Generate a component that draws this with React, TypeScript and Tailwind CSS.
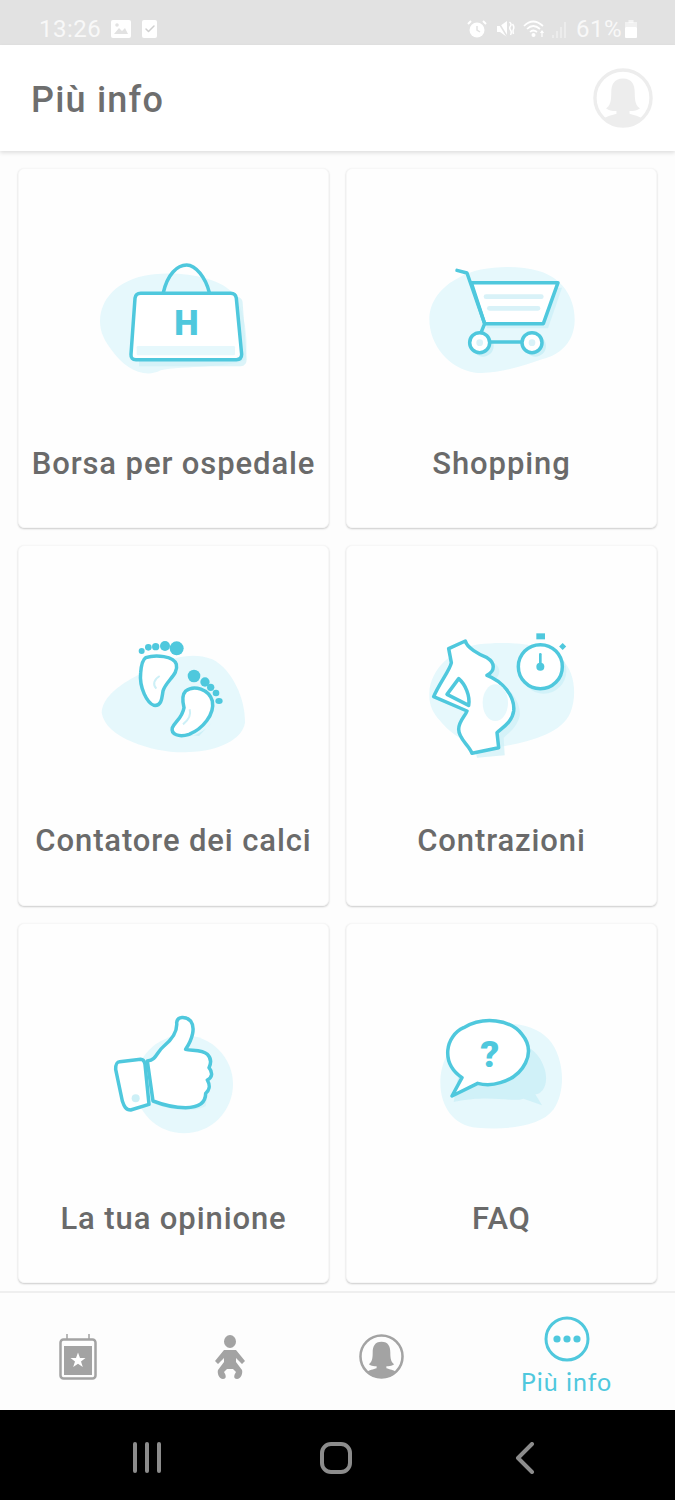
import React from 'react';
import { Check } from 'lucide-react';

const TEAL = '#4fc8dd';
const PALE = '#e6f8fc';
const SHADE = '#cdf0f7';
const SW = 10.5;

const Bag = () => (
    <>
        <path d="M58 210C60 130 130 78 220 70C300 60 420 78 460 130C490 170 505 270 495 325C470 350 300 345 240 358C190 385 130 350 95 300C72 270 58 245 58 210Z" fill={PALE} />
        <path d="M175 137H470Q485 140 486 155L498 325Q498 345 480 346H175Z" fill={SHADE} opacity="0.7" />
        <path d="M248 125C260 70 290 42 318 42C345 42 375 80 386 125" fill="none" stroke={TEAL} strokeWidth={SW} />
        <path d="M180 127H450Q465 127 467 142L483 310Q483 326 467 326H166Q150 326 151 310L163 142Q165 127 180 127Z" fill="#fff" stroke={TEAL} strokeWidth={SW} strokeLinejoin="round" />
        <rect x="168" y="285" width="295" height="28" rx="4" fill={PALE} />
        <text x="317" y="252" textAnchor="middle" fontFamily="Roboto" fontWeight="900" fontSize="104" fill={TEAL}>H</text>
    </>
);

const Cart = () => (
    <>
        <path d="M42 205C42 150 80 105 130 80C190 45 300 40 370 60C440 80 480 140 478 210C476 270 440 310 380 325C320 345 250 370 180 365C100 355 42 280 42 205Z" fill={PALE} />
        <path d="M180 110H440L398 232H215Z" fill={SHADE} opacity="0.8" />
        <circle cx="203" cy="285" r="32" fill={SHADE} />
        <circle cx="360" cy="285" r="32" fill={SHADE} />
        <path d="M168 95H428L384 218H208Z" fill="#fff" stroke={TEAL} strokeWidth={SW} strokeLinejoin="round" />
        <path d="M125 58L155 66L208 218L195 250" fill="none" stroke={TEAL} strokeWidth={SW} strokeLinecap="round" strokeLinejoin="round" />
        <rect x="205" y="130" width="180" height="14" rx="7" fill="#d9f2f8" />
        <rect x="215" y="165" width="160" height="14" rx="7" fill="#d9f2f8" />
        <path d="M225 273H320" stroke={TEAL} strokeWidth={SW} />
        <circle cx="193" cy="275" r="30" fill="#fff" stroke={TEAL} strokeWidth={SW} />
        <circle cx="350" cy="275" r="30" fill="#fff" stroke={TEAL} strokeWidth={SW} />
        <circle cx="193" cy="275" r="10" fill="#d9f2f8" />
        <circle cx="350" cy="275" r="10" fill="#d9f2f8" />
    </>
);

const Feet = () => (
    <>
        <path d="M48 260C50 210 110 170 170 140C230 110 300 70 380 100C440 130 480 220 478 290C470 340 400 375 310 378C220 385 60 340 48 260Z" fill={PALE} />
        <path d="M262 322C300 345 350 325 378 290L340 330Z" fill={SHADE} />
        <path d="M180 95C210 85 265 90 272 115C280 145 240 165 232 195C228 225 225 240 205 238C185 232 160 185 165 140C167 115 172 100 180 95Z" fill="#fff" stroke={TEAL} strokeWidth={SW} />
        <path d="M300 195C325 175 370 190 380 225C388 265 350 310 310 325C280 335 255 325 260 305C270 285 290 275 295 245C290 225 290 205 300 195Z" fill="#fff" stroke={TEAL} strokeWidth={SW} />
        <path d="M222 150C205 160 200 175 212 188" fill="none" stroke={SHADE} strokeWidth="6" />
        <path d="M312 250C318 270 305 285 292 295" fill="none" stroke={SHADE} strokeWidth="6" />
        <g fill={TEAL}>
            <circle cx="273" cy="67" r="21" />
            <circle cx="238" cy="60" r="15" />
            <circle cx="210" cy="62" r="11" />
            <circle cx="188" cy="64" r="10" />
            <circle cx="168" cy="75" r="9" />
            <circle cx="325" cy="150" r="19" />
            <circle cx="358" cy="168" r="14" />
            <circle cx="375" cy="184" r="11" />
            <circle cx="391" cy="201" r="10" />
            <ellipse cx="400" cy="225" rx="11" ry="9" />
        </g>
    </>
);

const Contractions = () => (
    <>
        <path d="M42 200C45 130 110 70 190 55C270 45 390 50 440 100C480 140 485 210 465 260C440 320 350 345 270 360C180 375 110 330 75 285C52 260 40 235 42 200Z" fill={PALE} />
        <path d="M120 80L160 60C170 80 210 100 235 110C260 125 255 150 235 163C280 180 318 225 313 270C305 305 280 320 265 335L268 388L185 395Z" fill={SHADE} opacity="0.7" />
        <circle cx="385" cy="135" r="68" fill={SHADE} opacity="0.8" />
        <path d="M100 68L150 45C155 65 190 85 215 95C240 110 240 135 215 148C260 165 300 210 295 255C290 290 260 305 245 320L250 365L170 382C160 355 130 340 130 310C130 285 150 270 155 255L55 212C70 175 105 130 108 110Z" fill="#fff" stroke={TEAL} strokeWidth={SW} strokeLinejoin="round" />
        <path d="M130 158L95 205L160 238C165 210 150 175 130 158Z" fill="#fff" stroke={TEAL} strokeWidth={SW} strokeLinejoin="round" />
        <ellipse cx="240" cy="230" rx="38" ry="55" fill={PALE} />
        <circle cx="375" cy="122" r="66" fill="#fff" stroke={TEAL} strokeWidth={SW} />
        <rect x="363" y="22" width="26" height="18" fill={TEAL} />
        <rect x="434" y="54" width="15" height="15" fill={TEAL} transform="rotate(45 442 62)" />
        <path d="M375 85V120" stroke={TEAL} strokeWidth="8" strokeLinecap="round" />
        <circle cx="375" cy="122" r="12" fill={TEAL} />
    </>
);

const Thumb = () => (
    <>
        <circle cx="265" cy="235" r="147" fill={PALE} />
        <path d="M180 295C230 315 300 318 330 300L345 200Z" fill={SHADE} opacity="0.6" />
        <path d="M72 167L135 160C142 160 146 165 148 175L160 295L105 312C90 312 85 300 80 285L60 190C60 175 62 168 72 167Z" fill="#fff" stroke={TEAL} strokeWidth={SW} strokeLinejoin="round" />
        <circle cx="120" cy="277" r="12" fill={SHADE} />
        <path d="M155 165C185 160 180 140 205 120C235 95 245 70 243 50C245 30 270 30 285 45C300 65 290 100 270 130C285 135 320 130 335 145C350 160 345 175 340 185C352 200 350 215 335 222C345 240 340 255 330 262C330 290 310 305 270 305C230 305 190 292 172 285Z" fill="#fff" stroke={TEAL} strokeWidth={SW} strokeLinejoin="round" />
    </>
);

const Faq = () => (
    <>
        <path d="M60 230C60 170 90 100 170 70C250 40 340 50 385 100C430 150 440 250 400 310C360 365 250 372 170 365C100 360 60 300 60 230Z" fill={PALE} />
        <path d="M130 120C190 80 320 90 360 160C395 220 370 265 345 265L365 298L310 278C270 290 210 265 100 288Z" fill={SHADE} opacity="0.9" />
        <path d="M125 215C60 170 75 90 130 65C190 30 270 40 305 85C350 140 310 210 240 230C215 238 195 238 172 232L95 270Z" fill="#fff" stroke={TEAL} strokeWidth={SW} strokeLinejoin="round" />
        <text x="208" y="184" textAnchor="middle" fontFamily="Roboto" fontWeight="900" fontSize="112" fill={TEAL}>?</text>
    </>
);

const cards = [
    { label: 'Borsa per ospedale', icon: <Bag />, viewBox: '10 0 540 420' },
    { label: 'Shopping', icon: <Cart />, viewBox: '-10 0 540 420' },
    { label: 'Contatore dei calci', icon: <Feet />, viewBox: '-5 6 540 420' },
    { label: 'Contrazioni', icon: <Contractions />, viewBox: '-10 6 540 420' },
    { label: 'La tua opinione', icon: <Thumb />, viewBox: '-35 0 540 420' },
    { label: 'FAQ', icon: <Faq />, viewBox: '-25 0 540 420' },
];

const Avatar: React.FC<{ color: string; className: string }> = ({ color, className }) => (
    <svg viewBox="0 0 46 46" className={className}>
        <circle cx="23" cy="23" r="21.5" fill="none" stroke={color} strokeWidth="2.6" />
        <path d="M23 8C16 8 14 13 14 19C14 26 13 29 10 31C13 33 16 33 18 33V35C15 36 10 37 8 39C12 43 18 45 23 45C28 45 34 43 38 39C36 37 31 36 28 35V33C30 33 33 33 36 31C33 29 32 26 32 19C32 13 30 8 23 8Z" fill={color} />
    </svg>
);

const StatusBar = () => (
    <div className="h-[45px] bg-[#e2e2e2] flex items-center justify-between pl-[39px] pr-[38px] pt-[12px] text-[#f8f8f8] font-['Roboto',sans-serif] font-normal text-[24px] leading-none tracking-[0.5px]">
        <div className="flex items-center">
            <span>13:26</span>
            <svg viewBox="0 0 20 18" className="w-[20px] h-[18px] ml-[10px]">
                <rect width="20" height="18" rx="2" fill="#fff" />
                <path d="M3 14L8 8L11 11L14 8L17 14Z" fill="#e2e2e2" />
                <circle cx="6" cy="5" r="1.8" fill="#e2e2e2" />
            </svg>
            <div className="w-[15px] h-[18px] ml-[11px] bg-white rounded-[2px] flex items-center justify-center">
                <Check size={12} strokeWidth={3} color="#cfcfcf" />
            </div>
        </div>
        <div className="flex items-center">
            <svg viewBox="0 0 20 20" className="w-[20px] h-[20px]">
                <circle cx="10" cy="11" r="7.5" fill="#fff" />
                <path d="M10 7V11L13 13" fill="none" stroke="#e2e2e2" strokeWidth="1.5" />
                <path d="M1 5L4 2M19 5L16 2" stroke="#fff" strokeWidth="2" />
            </svg>
            <svg viewBox="0 0 19 20" className="w-[19px] h-[20px] ml-[9px]">
                <path d="M1 7H4L11 2V18L4 13H1Z" fill="#fff" />
                <path d="M1 1L12 19" stroke="#e2e2e2" strokeWidth="1.5" />
                <path d="M13.5 3Q16 5 14.5 7T14.5 11T14.5 16M16.5 5Q18.5 8 17.5 10T17.5 15" fill="none" stroke="#fff" strokeWidth="1.5" />
            </svg>
            <svg viewBox="0 0 24 20" className="w-[24px] h-[20px] ml-[8px]">
                <path d="M1 7Q10 -2 20 7M4 10Q10 4 17 10M7 13Q10 10 14 13" fill="none" stroke="#fff" strokeWidth="1.7" />
                <circle cx="10.5" cy="16" r="2" fill="#fff" />
                <path d="M19 18V12M17.5 14L19 12L20.5 14" fill="none" stroke="#fff" strokeWidth="1.2" />
            </svg>
            <svg viewBox="0 0 18 20" className="w-[18px] h-[20px] ml-[4px]">
                <path d="M2 19V16M6 19V12M10 19V8M14 19V3" stroke="#fff" strokeWidth="1.2" opacity="0.6" />
            </svg>
            <span className="ml-[7px]">61%</span>
            <svg viewBox="0 0 12 18" className="w-[12px] h-[18px] ml-[3px]">
                <rect x="3.5" y="0" width="5" height="3" fill="#fff" opacity="0.6" />
                <rect x="0" y="2" width="12" height="5" fill="#fff" opacity="0.5" />
                <rect x="0" y="7" width="12" height="11" rx="1" fill="#fff" />
            </svg>
        </div>
    </div>
);

const BottomNav = () => (
    <div className="h-[119px] border-t-2 border-[#efefef] bg-[#fdfdfd] pl-[2px] grid grid-cols-[152px_152px_152px_217px] font-['Roboto',sans-serif]">
        <div className="flex justify-center pt-[41px]">
            <svg viewBox="0 0 38 46" className="w-[38px] h-[46px]">
                <path d="M8 0V6M30 0V6" stroke="#a3a3a3" strokeWidth="1.5" />
                <rect x="1.5" y="5.5" width="35" height="39" rx="3" fill="none" stroke="#a3a3a3" strokeWidth="2.5" />
                <rect x="5" y="12" width="28" height="29" fill="#a3a3a3" />
                <path d="M19 18.5L21 24H26.5L22 27.5L23.8 33L19 29.7L14.2 33L16 27.5L11.5 24H17Z" fill="#fff" />
            </svg>
        </div>
        <div className="flex justify-center pt-[42px]">
            <svg viewBox="0 0 32 44" className="w-[32px] h-[44px]">
                <ellipse cx="16" cy="6.5" rx="6" ry="6.5" fill="#a3a3a3" />
                <path d="M10 15H22L31 26L28 29L22 23V27L28 35C29 38 27 44 23 44C19 44 20 40 22 37L19 34H13L10 37C12 40 13 44 9 44C5 44 3 38 4 35L10 27V23L4 29L1 26Z" fill="#a3a3a3" />
            </svg>
        </div>
        <div className="flex justify-center pt-[41px] pr-[2px]">
            <Avatar color="#a3a3a3" className="w-[45px] h-[45px]" />
        </div>
        <div className="flex flex-col items-center pt-[23px]">
            <svg viewBox="0 0 46 46" className="w-[46px] h-[46px]">
                <circle cx="23" cy="23" r="21" fill="none" stroke={TEAL} strokeWidth="3" />
                <circle cx="13" cy="23" r="3.6" fill={TEAL} />
                <circle cx="23" cy="23" r="3.6" fill={TEAL} />
                <circle cx="33" cy="23" r="3.6" fill={TEAL} />
            </svg>
            <span className="mt-[4px] text-[25px] leading-[30px] tracking-[1px] font-normal text-[#4fc8dd] font-['Lato',sans-serif]">Più info</span>
        </div>
    </div>
);

export default function App() {
    return (
        <div className="w-[675px] h-[1500px] flex flex-col bg-[#fdfdfd] overflow-hidden">
            <StatusBar />
            <div className="relative h-[106px] bg-white flex items-center justify-between pl-[31px] pr-[22px] shadow-[0_2px_4px_rgba(0,0,0,0.12)]">
                <h1 className="pt-[4px] font-['Roboto',sans-serif] font-medium text-[36px] text-[#6e6e6e] tracking-[1.2px]">Più info</h1>
                <Avatar color="#ededed" className="w-[60px] h-[60px]" />
            </div>
            <div className="flex-1 pt-[17px] px-[18px] grid grid-cols-[311px_311px] gap-x-[17px] gap-y-[17px] grid-rows-[360px_361px_360px] content-start">
                {cards.map((card) => (
                    <div
                        key={card.label}
                        className="bg-[#fefefe] rounded-[6px] border border-[#f7f7f7] shadow-[0_1px_2px_rgba(0,0,0,0.2)] flex flex-col items-center pt-[82px]"
                    >
                        <svg viewBox={card.viewBox} className="w-[180px] h-[140px] shrink-0">
                            {card.icon}
                        </svg>
                        <div className="mt-[55px] font-['Roboto',sans-serif] font-medium text-[31px] leading-[36px] tracking-[0.9px] text-[#6a6a6a] whitespace-nowrap">
                            {card.label}
                        </div>
                    </div>
                ))}
            </div>
            <BottomNav />
            <div className="h-[90px] bg-black flex items-start pt-[32px]">
                <div className="w-[294px] flex justify-end gap-[8px] pr-[133px] box-border">
                    <div className="w-[4px] h-[31px] bg-[#8c8c8c] rounded-full" />
                    <div className="w-[4px] h-[31px] bg-[#8c8c8c] rounded-full" />
                    <div className="w-[4px] h-[31px] bg-[#8c8c8c] rounded-full" />
                </div>
                <div className="w-[32px] h-[32px] ml-[26px] border-[4px] border-[#8c8c8c] rounded-[11px]" />
                <svg viewBox="0 0 20 32" className="w-[20px] h-[32px] ml-[163px]">
                    <path d="M17 2L3 16L17 30" fill="none" stroke="#8c8c8c" strokeWidth="4" strokeLinecap="round" strokeLinejoin="round" />
                </svg>
            </div>
        </div>
    );
}
